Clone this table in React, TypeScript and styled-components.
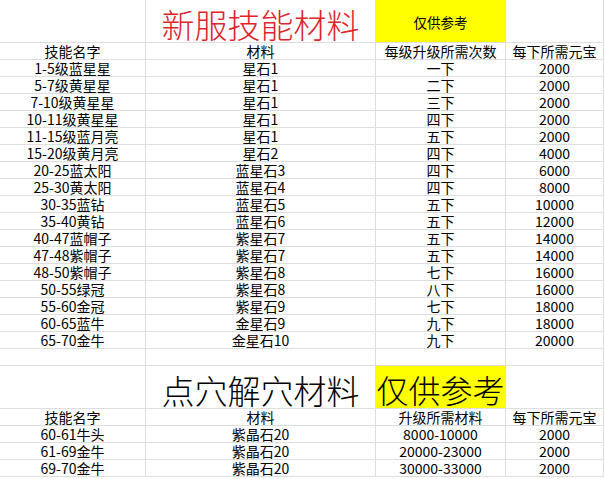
import styled, { createGlobalStyle } from 'styled-components';

const GlobalStyle = createGlobalStyle`
  html, body {
    margin: 0;
    padding: 0;
    background: #ffffff;
  }
  body {
    font-family: "Noto Sans CJK SC", "Liberation Sans", sans-serif;
    color: #000;
  }
`;

const Sheet = styled.div`
  display: grid;
  grid-template-columns: 146px 230px 130px 98px;
  width: 604px;
  background: #fff;
`;

const Cell = styled.div<{ $tall?: boolean }>`
  box-sizing: border-box;
  height: ${p => (p.$tall ? '43px' : '17px')};
  border-right: 1px solid #dedede;
  border-bottom: 1px solid #dedede;
  display: flex;
  align-items: center;
  justify-content: center;
  font-size: 14px;
  line-height: 14px;
  white-space: nowrap;
`;

const TitleCell = styled(Cell)<{ $color: string }>`
  font-size: 33px;
  line-height: 34px;
  font-weight: 300;
  color: ${p => p.$color};
  padding-top: 5px;
`;

const NoteCell = styled(Cell)<{ $big?: boolean }>`
  background: #ffff00;
  border-right-color: #ffff00;
  font-size: ${p => (p.$big ? '32px' : '13.5px')};
  line-height: ${p => (p.$big ? '34px' : '14px')};
  font-weight: ${p => (p.$big ? 300 : 400)};
  padding-top: ${p => (p.$big ? '4px' : '2px')};
`;

type SkillRow = [string, string, string, string];

const skillRows: SkillRow[] = [
  ['1-5级蓝星星', '星石1', '一下', '2000'],
  ['5-7级黄星星', '星石1', '二下', '2000'],
  ['7-10级黄星星', '星石1', '三下', '2000'],
  ['10-11级黄星星', '星石1', '四下', '2000'],
  ['11-15级蓝月亮', '星石1', '五下', '2000'],
  ['15-20级黄月亮', '星石2', '四下', '4000'],
  ['20-25蓝太阳', '蓝星石3', '四下', '6000'],
  ['25-30黄太阳', '蓝星石4', '四下', '8000'],
  ['30-35蓝钻', '蓝星石5', '五下', '10000'],
  ['35-40黄钻', '蓝星石6', '五下', '12000'],
  ['40-47蓝帽子', '紫星石7', '五下', '14000'],
  ['47-48紫帽子', '紫星石7', '五下', '14000'],
  ['48-50紫帽子', '紫星石8', '七下', '16000'],
  ['50-55绿冠', '紫星石8', '八下', '16000'],
  ['55-60金冠', '紫星石9', '七下', '18000'],
  ['60-65蓝牛', '金星石9', '九下', '18000'],
  ['65-70金牛', '金星石10', '九下', '20000'],
];

const acupointRows: SkillRow[] = [
  ['60-61牛头', '紫晶石20', '8000-10000', '2000'],
  ['61-69金牛', '紫晶石20', '20000-23000', '2000'],
  ['69-70金牛', '紫晶石20', '30000-33000', '2000'],
];

function Row({ cells }: { cells: SkillRow }) {
  return (
    <>
      {cells.map((c, i) => (
        <Cell key={i}>{c}</Cell>
      ))}
    </>
  );
}

export default function App() {
  return (
    <>
      <GlobalStyle />
      <Sheet>
        <Cell $tall />
        <TitleCell $tall $color="#e0232b">新服技能材料</TitleCell>
        <NoteCell $tall>仅供参考</NoteCell>
        <Cell $tall />

        <Row cells={['技能名字', '材料', '每级升级所需次数', '每下所需元宝']} />
        {skillRows.map((r, i) => (
          <Row key={i} cells={r} />
        ))}

        <Row cells={['', '', '', '']} />

        <Cell $tall />
        <TitleCell $tall $color="#000">点穴解穴材料</TitleCell>
        <NoteCell $tall $big>仅供参考</NoteCell>
        <Cell $tall />

        <Row cells={['技能名字', '材料', '升级所需材料', '每下所需元宝']} />
        {acupointRows.map((r, i) => (
          <Row key={i} cells={r} />
        ))}
      </Sheet>
    </>
  );
}
